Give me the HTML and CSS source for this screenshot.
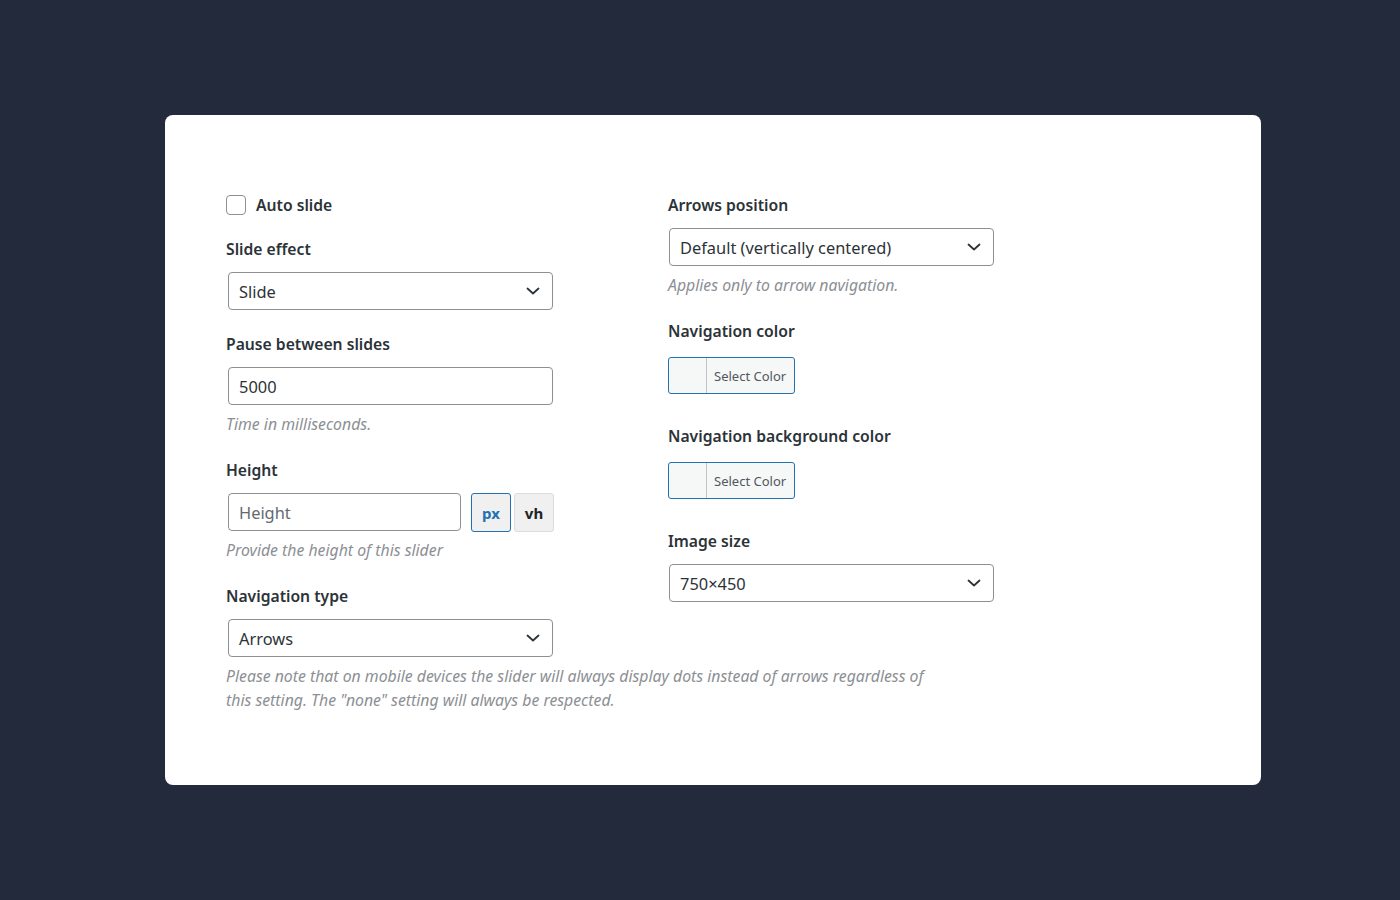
FILE: index.html
```html
<!DOCTYPE html>
<html lang="en">
<head>
<meta charset="utf-8">
<title>Slider settings</title>
<link rel="stylesheet" href="styles.css">
</head>
<body>
<div class="card">
  <div class="cols">
    <div class="col">
      <label class="check-row"><span class="checkbox"></span><span class="check-label">Auto slide</span></label>

      <div class="field tight">
        <div class="label">Slide effect</div>
        <div class="select"><span>Slide</span><svg class="chev" viewBox="0 0 14 8" width="14" height="8"><polyline points="1.5,1.5 7,6.5 12.5,1.5" fill="none" stroke="#2c3338" stroke-width="1.8" stroke-linecap="round" stroke-linejoin="round"/></svg></div>
      </div>

      <div class="field">
        <div class="label">Pause between slides</div>
        <div class="input"><span>5000</span></div>
        <div class="help">Time in milliseconds.</div>
      </div>

      <div class="field">
        <div class="label">Height</div>
        <div class="height-row">
          <div class="input short"><span class="placeholder">Height</span></div>
          <span class="unit active">px</span>
          <span class="unit">vh</span>
        </div>
        <div class="help">Provide the height of this slider</div>
      </div>

      <div class="field last">
        <div class="label">Navigation type</div>
        <div class="select"><span>Arrows</span><svg class="chev" viewBox="0 0 14 8" width="14" height="8"><polyline points="1.5,1.5 7,6.5 12.5,1.5" fill="none" stroke="#2c3338" stroke-width="1.8" stroke-linecap="round" stroke-linejoin="round"/></svg></div>
      </div>
    </div>

    <div class="col right">
      <div class="field">
        <div class="label">Arrows position</div>
        <div class="select"><span>Default (vertically centered)</span><svg class="chev" viewBox="0 0 14 8" width="14" height="8"><polyline points="1.5,1.5 7,6.5 12.5,1.5" fill="none" stroke="#2c3338" stroke-width="1.8" stroke-linecap="round" stroke-linejoin="round"/></svg></div>
        <div class="help">Applies only to arrow navigation.</div>
      </div>

      <div class="field color-field">
        <div class="label">Navigation color</div>
        <button class="color-btn"><span class="swatch"></span><span class="color-text">Select Color</span></button>
      </div>

      <div class="field color-field">
        <div class="label">Navigation background color</div>
        <button class="color-btn"><span class="swatch"></span><span class="color-text">Select Color</span></button>
      </div>

      <div class="field">
        <div class="label">Image size</div>
        <div class="select"><span>750×450</span><svg class="chev" viewBox="0 0 14 8" width="14" height="8"><polyline points="1.5,1.5 7,6.5 12.5,1.5" fill="none" stroke="#2c3338" stroke-width="1.8" stroke-linecap="round" stroke-linejoin="round"/></svg></div>
      </div>
    </div>
  </div>
  <p class="note">Please note that on mobile devices the slider will always display dots instead of arrows regardless of this setting. The "none" setting will always be respected.</p>
</div>
</body>
</html>
```

FILE: styles.css
```css
* { box-sizing: border-box; }
html, body { margin: 0; padding: 0; }
body {
  background: #222a3c;
  font-family: "Noto Sans", "Open Sans", sans-serif;
  color: #1d2327;
  padding-top: 115px;
}
.card {
  width: 1096px;
  height: 670px;
  margin: 0 0 0 165px;
  background: #ffffff;
  border-radius: 8px;
  padding: 79px 61px 0 61px;
}
.cols {
  display: grid;
  grid-template-columns: 330px 330px;
  column-gap: 112px;
  align-items: start;
}
.col { display: flex; flex-direction: column; }

.check-row {
  display: flex;
  align-items: center;
  gap: 10px;
  height: 22px;
  margin-bottom: 22px;
}
.checkbox {
  width: 20px;
  height: 20px;
  border: 1px solid #8c8f94;
  border-radius: 4px;
  background: #fff;
}
.check-label, .label {
  font-size: 15.7px;
  font-weight: 600;
  line-height: 22px;
  color: #2c3338;
}
.check-label { margin-top: -1px; }
.label { margin-bottom: 12px; }
.field { margin-bottom: 24px; }
.field.tight { margin-bottom: 23px; }
.field.last { margin-bottom: 7px; }
.color-field { margin-bottom: 31px; }
.color-field .label { margin-bottom: 15px; }

.select, .input {
  height: 38px;
  width: 325px;
  margin-left: 2px;
  border: 1px solid #8c8f94;
  border-radius: 4px;
  display: flex;
  align-items: center;
  justify-content: space-between;
  padding: 0 12px 0 10px;
  font-size: 16.4px;
  color: #2c3338;
  background: #fff;
}
.right .select { margin-left: 1px; }
.right .field:first-child .select { margin-top: 1px; }
.chev { flex: none; }
.help {
  margin-top: 8px;
  font-size: 15.8px;
  line-height: 22px;
  font-style: italic;
  color: #8c8f94;
}
.height-row {
  display: flex;
  align-items: flex-start;
}
.input.short { width: 233px; }
.placeholder { color: #646970; }
.unit {
  width: 40px;
  height: 39px;
  display: flex;
  align-items: center;
  justify-content: center;
  font-size: 15px;
  font-weight: 700;
  background: #f0f0f1;
  border: 1px solid #dcdcde;
  border-radius: 3px;
  color: #1d2327;
  margin-left: 3px;
}
.unit.active {
  margin-left: 10px;
  border-color: #2271b1;
  color: #2271b1;
}
.height-row + .help { margin-top: 7px; }

.color-btn {
  display: flex;
  align-items: stretch;
  width: 127px;
  height: 37px;
  padding: 0;
  border: 1px solid #2271b1;
  border-radius: 3px;
  background: #f6f7f7;
  font-family: inherit;
  cursor: pointer;
}
.swatch {
  width: 38px;
  border-right: 1px solid #c3c4c7;
}
.color-text {
  display: flex;
  align-items: center;
  padding-left: 7px;
  font-size: 13px;
  color: #50575e;
}

.note {
  margin: 0;
  max-width: 705px;
  font-size: 15.8px;
  line-height: 24px;
  font-style: italic;
  color: #8c8f94;
}
```
